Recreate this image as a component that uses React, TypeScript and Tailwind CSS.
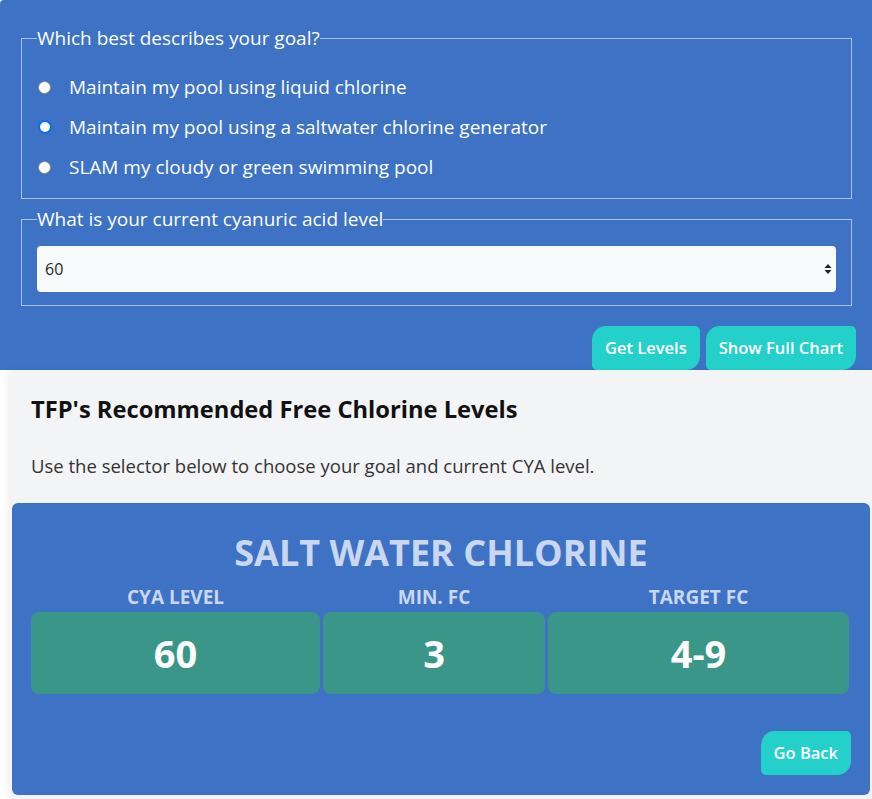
import React from "react";

const font = { fontFamily: '"Open Sans", "Noto Sans", sans-serif' };

function Radio({ checked }: { checked?: boolean }) {
  return checked ? (
    <span className="inline-block w-[14px] h-[14px] rounded-full bg-white border-2 border-[#0b6cf5] shrink-0" />
  ) : (
    <span className="inline-block w-[13px] h-[13px] rounded-full bg-white border border-[#8a8a8a] shrink-0" />
  );
}

const btn =
  "h-[44px] px-[13px] bg-[#24d0ca] text-white text-[16.5px] font-semibold rounded-tl-[14px] rounded-br-[14px] rounded-tr-[5px] rounded-bl-[5px]";

export default function App() {
  const options = [
    { label: "Maintain my pool using liquid chlorine", checked: false },
    { label: "Maintain my pool using a saltwater chlorine generator", checked: true },
    { label: "SLAM my cloudy or green swimming pool", checked: false },
  ];
  return (
    <div className="w-[872px] h-[799px] overflow-hidden bg-white" style={font}>
      <div className="bg-[#3d72c4] pt-[26px] pl-[21px] pr-[16px] rounded-tl-[4px]">
        <fieldset className="border border-[#a9bfe3] mr-[4px] px-[15px] pb-[11px]">
          <legend className="px-0 text-[19px] leading-[24px] text-white">Which best describes your goal?</legend>
          <div className="flex flex-col pt-[17px]">
            {options.map((o) => (
              <div key={o.label} className="flex items-center h-[40px]">
                <span className="pl-[1px] w-[32px] flex">
                  <Radio checked={o.checked} />
                </span>
                <span className="text-[19px] text-white leading-[24px]">{o.label}</span>
              </div>
            ))}
          </div>
        </fieldset>
        <fieldset className="border border-[#a9bfe3] mr-[4px] mt-[8px] px-[15px] pb-[13px]">
          <legend className="px-0 text-[19px] leading-[24px] text-white">What is your current cyanuric acid level</legend>
          <div className="mt-[15px] h-[46px] bg-[#f8f9fa] rounded-[4px] flex items-center justify-between pl-[8px] pr-[4px]">
            <span className="text-[16px] text-[#212529]">60</span>
            <svg width="8" height="12" viewBox="0 0 8 12">
              <path d="M4 1 L7.5 5 L0.5 5 Z" fill="#222" />
              <path d="M4 11 L7.5 7 L0.5 7 Z" fill="#222" />
            </svg>
          </div>
        </fieldset>
        <div className="flex justify-end gap-[6px] pt-[20px]">
          <button className={btn}>Get Levels</button>
          <button className={btn}>Show Full Chart</button>
        </div>
      </div>
      <div className="ml-[10px] bg-[#f3f4f6] h-[429px] shadow-[-3px_0_6px_rgba(0,0,0,0.06)] pl-[2px] pr-[2px]">
        <div className="pl-[19px] pt-[24px]">
          <h2 className="text-[23.7px] font-bold text-[#111] leading-[30px]">TFP's Recommended Free Chlorine Levels</h2>
          <p className="text-[18.5px] text-[#333] mt-[29px] leading-[26px]">Use the selector below to choose your goal and current CYA level.</p>
        </div>
        <div className="mt-[24px] bg-[#3d72c4] rounded-[6px] h-[292px] px-[19px] pt-[28px] flex flex-col">
          <div className="text-center text-[36px] font-bold text-[#c9d7f0] leading-[44px]">SALT WATER CHLORINE</div>
          <div className="grid grid-cols-[289px_222px_301px] gap-x-[3px] mt-[10px]">
            {["CYA LEVEL", "MIN. FC", "TARGET FC"].map((h) => (
              <div key={h} className="text-center text-[19px] font-bold text-[#c9d7f0] leading-[24px]">{h}</div>
            ))}
            {["60", "3", "4-9"].map((v) => (
              <div key={v} className="h-[82px] bg-[#3a9688] rounded-[8px] flex items-center justify-center text-[38px] font-bold text-white mt-[3px]">
                {v}
              </div>
            ))}
          </div>
          <div className="flex justify-end mt-[37px]">
            <button className={btn}>Go Back</button>
          </div>
        </div>
      </div>
    </div>
  );
}
